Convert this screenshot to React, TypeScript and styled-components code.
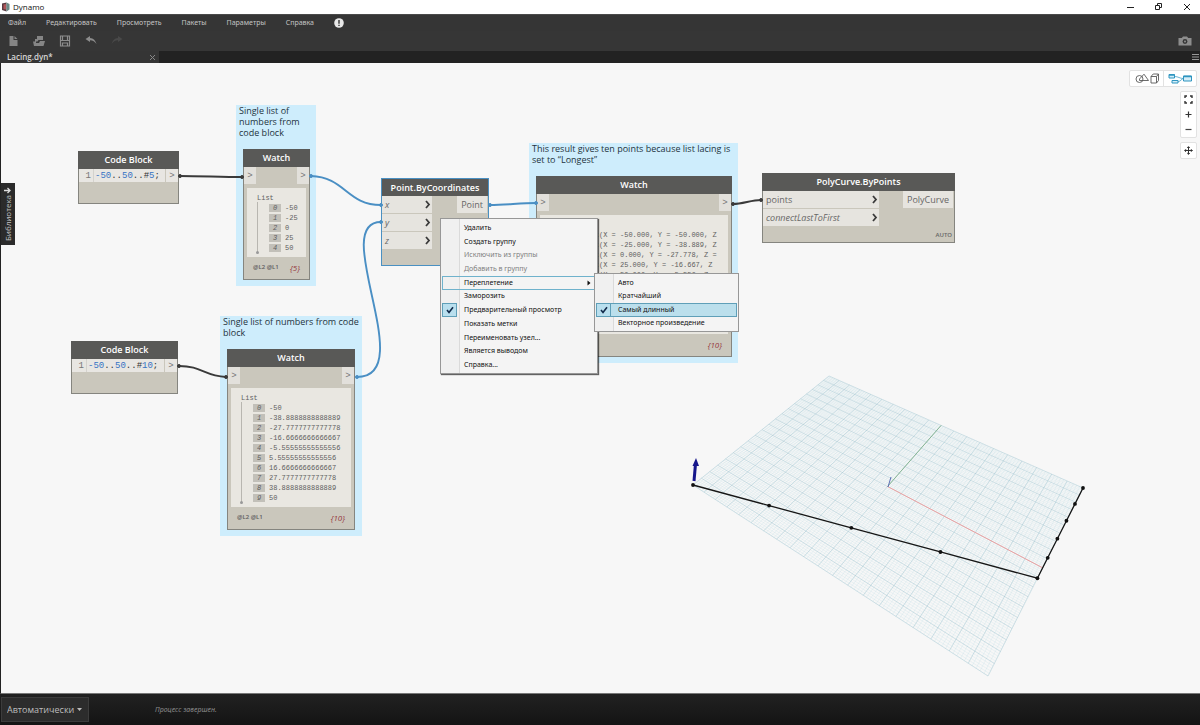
import React from "react";
import styled, { createGlobalStyle, css } from "styled-components";

const UI = `"Open Sans", "Noto Sans", sans-serif`;
const MENU = `"Noto Sans", "Open Sans", sans-serif`;
const MONO = `"Liberation Mono", "DejaVu Sans Mono", monospace`;

const GlobalStyle = createGlobalStyle`
  *, *::before, *::after { box-sizing: border-box; }
  html, body, #root { height: 100%; }
  body { margin: 0; font-family: ${UI}; background: #1b1b1b; overflow: hidden; }
  button, select { font: inherit; color: inherit; background: none; border: 0; padding: 0; margin: 0; }
`;

/* ---------- application frame ---------- */

const Shell = styled.div`
  display: flex;
  flex-direction: column;
  height: 100%;
`;

const TitleBar = styled.header`
  display: flex;
  align-items: center;
  gap: 3px;
  height: 14px;
  padding: 0 8px 0 1px;
  background: #fff;
  color: #111;
  font-size: 8px;
  line-height: 14px;
`;

const WindowButtons = styled.div`
  display: flex;
  gap: 18px;
  margin-left: auto;
`;

const IconButton = styled.button`
  display: flex;
  align-items: center;
  justify-content: center;
`;

const MenuBar = styled.nav`
  display: flex;
  align-items: center;
  gap: 20px;
  height: 17px;
  padding-left: 8px;
  background: #353535;
  border-top: 1px solid #4a4a4a;
  color: #c4c4c4;
  font-family: ${MENU};
  font-size: 7px;
  line-height: 16px;
`;

const ToolBar = styled.div`
  display: flex;
  align-items: center;
  gap: 12px;
  height: 20px;
  padding: 0 8px 0 6px;
  background: #363636;
  color: #8d8d8d;
`;

const ToolSpacer = styled.div`
  flex: 1;
`;

const TabStrip = styled.div`
  display: flex;
  justify-content: space-between;
  height: 12px;
  background: #222;
  color: #8a8a8a;
`;

const Tab = styled.div`
  display: flex;
  align-items: center;
  justify-content: space-between;
  width: 159px;
  padding: 0 3px 0 7px;
  background: #353535;
  color: #d6d6d6;
  font-size: 8px;
  font-weight: 600;
  line-height: 12px;
`;

const Workspace = styled.main`
  position: relative;
  flex: 1;
  min-height: 0;
  overflow: hidden;
  background: #f7f7f7;
  border-left: 1px solid #222;
  border-bottom: 1px solid #777;
`;

const StatusBar = styled.footer`
  display: flex;
  align-items: center;
  gap: 66px;
  height: 31px;
  padding-left: 1px;
  background: linear-gradient(#212121, #141414);
  color: #8a8a8a;
  font-family: ${MENU};
  font-size: 7px;
  font-style: italic;
`;

const RunMode = styled.label`
  position: relative;
  display: flex;
  align-items: center;
  height: 25px;
  background: #2c2c2c;
  border: 1px solid #3c3c3c;
  color: #bdbdbd;

  select {
    appearance: none;
    width: 86px;
    height: 23px;
    padding-left: 5px;
    font-family: ${UI};
    font-size: 9px;
    font-style: normal;
  }
  svg {
    position: absolute;
    right: 6px;
    pointer-events: none;
  }
`;

/* ---------- things that float over the canvas ---------- */

const LibraryTab = styled.button`
  position: absolute;
  left: -1px;
  top: 120px;
  display: flex;
  flex-direction: column;
  align-items: center;
  justify-content: space-between;
  width: 15px;
  height: 62px;
  padding: 4px 0;
  background: #2b2b2b;
  color: #c4c4c4;
  font-size: 8px;
  line-height: 10px;

  span {
    writing-mode: vertical-rl;
    transform: rotate(180deg);
  }
`;

const ViewControls = styled.div`
  position: absolute;
  top: 7px;
  right: 3px;
  display: flex;
  flex-direction: column;
  align-items: flex-end;
  gap: 4px;
`;

const ControlBox = styled.div<{ $row?: boolean }>`
  display: flex;
  flex-direction: ${(p) => (p.$row ? "row" : "column")};
  background: #fff;
  border: 1px solid #e2e2e2;
  border-radius: 2px;
  color: #555;

  button { width: 15px; height: 15px; }
  ${(p) =>
    p.$row &&
    css`
      button { width: 33px; height: 15px; }
      button + button { border-left: 1px solid #e2e2e2; }
    `}
`;

const Overlay = styled.svg`
  position: absolute;
  left: -1px;
  top: 0;
  pointer-events: none;
`;

const placed = css<{ $x: number; $y: number; $w: number; $h: number }>`
  position: absolute;
  left: ${(p) => p.$x - 1}px;
  top: ${(p) => p.$y}px;
  width: ${(p) => p.$w}px;
  height: ${(p) => p.$h}px;
`;

const Group = styled.section`
  ${placed}
  padding: 0 3px;
  background: #ceedfc;
  color: #1f3440;
  font-size: 9px;
  line-height: 11px;
`;

const NodeTitle = styled.h2`
  flex: none;
  margin: -1px -1px 0;
  height: 18px;
  background: #595957;
  color: #fff;
  font-size: 9px;
  font-weight: 600;
  line-height: 18px;
  text-align: center;
`;

const NodeBox = styled.article<{ $selected?: boolean }>`
  ${placed}
  display: flex;
  flex-direction: column;
  background: #cac7bc;
  border: 1px solid ${(p) => (p.$selected ? "#4a90c2" : "#85857f")};
  color: #666;
  font-size: 9px;

  ${(p) => p.$selected && css`${NodeTitle} { margin: 0; height: 17px; line-height: 17px; }`}
`;

const CodeRow = styled.div`
  display: flex;
  height: 13px;
  background: #e8e6e2;
  font-family: ${MONO};
  font-size: 9px;
  line-height: 14px;
  white-space: pre;
`;

const LineNumber = styled.span`
  width: 15px;
  padding-right: 2px;
  border-right: 1px solid #d4d2cd;
  text-align: right;
  color: #777;
`;

const Code = styled.code`
  flex: 1;
  padding-left: 1px;
  font-family: inherit;
  color: #333;
  b { font-weight: 400; color: #3673c4; }
`;

const CodePort = styled.span`
  width: 13px;
  border-left: 1px solid #cac7bc;
  text-align: center;
  color: #777;
`;

const PortRow = styled.div`
  display: flex;
  justify-content: space-between;
  align-items: flex-start;
`;

const PortMark = styled.span`
  width: 12px;
  height: 17px;
  background: #e2e0db;
  color: #777;
  font-family: ${MONO};
  font-size: 9px;
  line-height: 18px;
  text-align: center;
`;

const InputPorts = styled.div<{ $w: number }>`
  display: flex;
  flex-direction: column;
  gap: 1px;
  width: ${(p) => p.$w}px;
`;

const InputPort = styled.div<{ $optional?: boolean }>`
  display: flex;
  align-items: center;
  justify-content: space-between;
  height: 17px;
  padding: 0 1px 0 3px;
  background: #e6e4df;
  font-style: ${(p) => (p.$optional ? "italic" : "normal")};
`;

const OutputPort = styled.div`
  height: 17px;
  margin-right: 1px;
  padding: 0 4px;
  background: #e6e4df;
  line-height: 17px;
`;

const Lacing = styled.div`
  margin: auto 2px 3px auto;
  font-size: 6px;
  font-weight: 600;
  line-height: 8px;
`;

const Panel = styled.div`
  flex: 1;
  min-height: 0;
  margin: 4px 3px 0;
  padding: 6px 0 0 10px;
  overflow: hidden;
  background: #e9e7e1;
  color: #5e5e5e;
  font-family: ${MONO};
  font-size: 7px;
  line-height: 8px;
`;

const List = styled.ol`
  position: relative;
  margin: 0;
  padding: 1px 0 0 12px;
  list-style: none;

  &::before {
    content: "";
    position: absolute;
    left: 0;
    top: 0;
    bottom: 0;
    border-left: 1px solid #b8b6b0;
  }
  &::after {
    content: "";
    position: absolute;
    left: -1px;
    bottom: -1px;
    width: 3px;
    height: 3px;
    border-radius: 50%;
    background: #999;
  }
`;

const ListRow = styled.li`
  display: flex;
  align-items: center;
  gap: 4px;
  height: 10px;
  white-space: pre;

  i {
    width: 12px;
    height: 8px;
    background: #c2c0b9;
    text-align: center;
  }
`;

const NodeFooter = styled.div`
  display: flex;
  flex: none;
  align-items: center;
  justify-content: space-between;
  height: 22px;
  padding: 0 9px 2px;
  font-size: 6px;
  font-weight: 600;
  color: #5c5c5c;

  em { font-size: 8px; font-weight: 400; color: #96393c; }
`;

const ContextMenu = styled.ul<{ $raised?: boolean }>`
  ${placed}
  display: grid;
  grid-auto-rows: 1fr;
  margin: 0;
  padding: 2px 1px 1px;
  list-style: none;
  background: linear-gradient(90deg, #f0f0f0 18px, #dadada 18px, #dadada 19px, #f4f4f4 19px);
  border: 1px solid #979797;
  box-shadow: ${(p) => (p.$raised ? "1px 1px 1px rgba(0, 0, 0, 0.6)" : "none")};
  color: #111;
  font-family: ${MENU};
  font-size: 7px;
`;

const MenuItem = styled.button<{ $state?: "open" | "chosen" }>`
  display: grid;
  grid-template-columns: 14px 1fr auto;
  align-items: center;
  column-gap: 7px;
  width: 100%;
  height: 100%;
  padding: 0 4px 0 0;
  border: 1px solid transparent;
  text-align: left;
  line-height: 10px;
  white-space: nowrap;

  &:disabled { color: #808080; }
  ${(p) => p.$state === "open" && css`border-color: #6fb2cc;`}
  ${(p) => p.$state === "chosen" && css`border-color: #5f9fb8; background: #bbdfec;`}
`;

const CheckCell = styled.span<{ $on?: boolean }>`
  display: flex;
  align-items: center;
  justify-content: center;
  align-self: stretch;
  margin: -1px 0 -1px -1px;
  ${(p) => p.$on && css`background: #b9dfee; border: 1px solid #5f9fb8;`}
`;

/* ---------- pieces ---------- */

const Check = () => (
  <svg width="8" height="8" viewBox="0 0 8 8" fill="none" stroke="#112a4a" strokeWidth="1.6">
    <path d="M1 4l2 2.4L7 1.2" />
  </svg>
);

const Chevron = () => (
  <svg width="7" height="9" viewBox="0 0 7 9" fill="none" stroke="#3a3a3a" strokeWidth="1.8">
    <path d="M2 1l3 3.5L2 8" />
  </svg>
);

type Box = { x: number; y: number; w: number; h: number };

function CodeBlock({ x, y, w, h, count }: Box & { count: string }) {
  return (
    <NodeBox $x={x} $y={y} $w={w} $h={h}>
      <NodeTitle>Code Block</NodeTitle>
      <CodeRow>
        <LineNumber>1</LineNumber>
        <Code>
          <b>-50</b>..<b>50</b>..#<b>{count}</b>;
        </Code>
        <CodePort>&gt;</CodePort>
      </CodeRow>
    </NodeBox>
  );
}

function Watch({ x, y, w, h, rows }: Box & { rows: string[] }) {
  return (
    <NodeBox $x={x} $y={y} $w={w} $h={h}>
      <NodeTitle>Watch</NodeTitle>
      <PortRow>
        <PortMark>&gt;</PortMark>
        <PortMark>&gt;</PortMark>
      </PortRow>
      <Panel>
        List
        <List>
          {rows.map((value, i) => (
            <ListRow key={i}>
              <i>{i}</i>
              {value}
            </ListRow>
          ))}
        </List>
      </Panel>
      <NodeFooter>
        <span>@L2 @L1</span>
        <em>{`{${rows.length}}`}</em>
      </NodeFooter>
    </NodeBox>
  );
}

const fiveNumbers = ["-50", "-25", "0", "25", "50"];
const tenNumbers = [
  "-50",
  "-38.8888888888889",
  "-27.7777777777778",
  "-16.6666666666667",
  "-5.55555555555556",
  "5.55555555555556",
  "16.6666666666667",
  "27.7777777777778",
  "38.8888888888889",
  "50",
];
/* Longest lacing: the last x repeats once the shorter list runs out. */
const points = tenNumbers.map((n, i) => ({
  x: [-50, -25, 0, 25, 50][Math.min(i, 4)],
  y: parseFloat(n),
}));
const VISIBLE_CHARS = 33;
const pointRows = points.map((p) =>
  `Point(X = ${p.x.toFixed(3)}, Y = ${p.y.toFixed(3)}, Z = 0.000)`.slice(0, VISIBLE_CHARS),
);

/* Perspective map from the model plane (-50..50 on both axes) to the canvas. */
const corner = { o: [693, 422], x: [988, 613], y: [829, 313], xy: [1083, 425] };
function project(mx: number, my: number): [number, number] {
  const { o, x, y, xy } = corner;
  const u = (mx + 50) / 100;
  const v = (my + 50) / 100;
  const dx1 = x[0] - xy[0];
  const dx2 = y[0] - xy[0];
  const dx3 = o[0] - x[0] + xy[0] - y[0];
  const dy1 = x[1] - xy[1];
  const dy2 = y[1] - xy[1];
  const dy3 = o[1] - x[1] + xy[1] - y[1];
  const det = dx1 * dy2 - dx2 * dy1;
  const g = (dx3 * dy2 - dx2 * dy3) / det;
  const h = (dx1 * dy3 - dx3 * dy1) / det;
  const k = g * u + h * v + 1;
  return [
    ((x[0] - o[0] + g * x[0]) * u + (y[0] - o[0] + h * y[0]) * v + o[0]) / k,
    ((x[1] - o[1] + g * x[1]) * u + (y[1] - o[1] + h * y[1]) * v + o[1]) / k,
  ];
}
const segment = (ax: number, ay: number, bx: number, by: number) =>
  `M${project(ax, ay).join(" ")}L${project(bx, by).join(" ")}`;

function gridPath(step: number) {
  let d = "";
  for (let t = -50; t <= 50; t += step) d += segment(t, -50, t, 50) + segment(-50, t, 50, t);
  return d;
}

function Scene() {
  const curve = points.map((p) => project(p.x, p.y));
  return (
    <Overlay width="1200" height="630" fill="none">
      <path d={gridPath(1)} stroke="#9ed0da" strokeOpacity="0.34" strokeWidth="0.5" />
      <path d={gridPath(5)} stroke="#7fafbf" strokeOpacity="0.5" strokeWidth="0.5" />
      <path d={segment(0, 0, 50, 0)} stroke="#ee9a9a" strokeWidth="0.9" />
      <path d={segment(0, 0, 0, 50)} stroke="#7fb08a" strokeWidth="0.9" />
      <path d="M888 424l3-10" stroke="#5b6fb5" />
      <polyline points={curve.map((p) => p.join(",")).join(" ")} stroke="#161616" strokeWidth="1.3" />
      {curve.map(([cx, cy], i) => (
        <circle key={i} cx={cx} cy={cy} r="1.9" fill="#111" />
      ))}
      <path d="M694 418l1.5-17" stroke="#17178c" strokeWidth="3" />
      <path d="M692.5 403l3.5-8 3 8z" fill="#17178c" />
    </Overlay>
  );
}

const blue = "#4a8fc4";
const dark = "#3a3a3a";
const wires = [
  { d: "M180 113C200 113 222 114 242 114", c: dark, a: [180, 113], b: [242, 114] },
  { d: "M179 303C202 303 204 313 226 314", c: dark, a: [179, 303], b: [226, 314] },
  { d: "M311 113C345 114 347 142 381 142", c: blue, a: [311, 113], b: [381, 142] },
  { d: "M357 314C420 314 328 159 381 159", c: blue, a: [357, 314], b: [381, 159] },
  { d: "M490 142C506 142 520 140 536 140", c: blue, a: [490, 142], b: [536, 140] },
  { d: "M733 141C743 141 751 137 761 137", c: dark, a: [733, 141], b: [761, 137] },
];

function Wires() {
  return (
    <Overlay width="1200" height="630" fill="none">
      {wires.map((w, i) => (
        <g key={i} stroke={w.c} fill={w.c}>
          <path d={w.d} fill="none" strokeWidth="1.9" />
          <circle cx={w.a[0]} cy={w.a[1]} r="1.5" />
          <circle cx={w.b[0]} cy={w.b[1]} r="1.5" />
        </g>
      ))}
    </Overlay>
  );
}

type Item = { label: string; disabled?: boolean; checked?: boolean; state?: "open" | "chosen" };

const nodeMenu: Item[] = [
  { label: "Удалить" },
  { label: "Создать группу" },
  { label: "Исключить из группы", disabled: true },
  { label: "Добавить в группу", disabled: true },
  { label: "Переплетение", state: "open" },
  { label: "Заморозить" },
  { label: "Предварительный просмотр", checked: true },
  { label: "Показать метки" },
  { label: "Переименовать узел..." },
  { label: "Является выводом" },
  { label: "Справка..." },
];
const lacingMenu: Item[] = [
  { label: "Авто" },
  { label: "Кратчайший" },
  { label: "Самый длинный", checked: true, state: "chosen" },
  { label: "Векторное произведение" },
];

function Menu({ x, y, w, h, items, raised }: Box & { items: Item[]; raised?: boolean }) {
  return (
    <ContextMenu $x={x} $y={y} $w={w} $h={h} $raised={raised}>
      {items.map((item) => (
        <li key={item.label}>
          <MenuItem disabled={item.disabled} $state={item.state}>
            <CheckCell $on={item.checked}>{item.checked && <Check />}</CheckCell>
            {item.label}
            {item.state === "open" && (
              <svg width="4" height="6" viewBox="0 0 4 6">
                <path d="M0.5 0.5L3.5 3L0.5 5.5z" fill="#111" />
              </svg>
            )}
          </MenuItem>
        </li>
      ))}
    </ContextMenu>
  );
}

function WindowChrome() {
  return (
    <>
      <TitleBar>
        <svg width="9" height="10" viewBox="0 0 9 10">
          <path d="M1 1.5L5.5 .5v9L1 8z" fill="#5a3a40" />
          <path d="M2.500 2.500l2.500-.5v5.500L2.500 7z" fill="#b0555a" />
          <path d="M5.500 .5l3 1.500v5.500l-3 2z" fill="#6b8a86" />
        </svg>
        Dynamo
        <WindowButtons>
          <IconButton aria-label="Свернуть">
            <svg width="10" height="10" stroke="#222"><path d="M1 5.500h7" /></svg>
          </IconButton>
          <IconButton aria-label="Восстановить">
            <svg width="10" height="10" fill="none" stroke="#222">
              <path d="M1.500 3.500h4v4h-4zM3.500 3.500v-2h4v4h-2" />
            </svg>
          </IconButton>
          <IconButton aria-label="Закрыть">
            <svg width="10" height="10" stroke="#222"><path d="M2 2l6 6M8 2L2 8" /></svg>
          </IconButton>
        </WindowButtons>
      </TitleBar>
      <MenuBar>
        {["Файл", "Редактировать", "Просмотреть", "Пакеты", "Параметры", "Справка"].map((m) => (
          <button key={m}>{m}</button>
        ))}
        <IconButton aria-label="Уведомления">
          <svg width="10" height="10" viewBox="0 0 10 10">
            <circle cx="5" cy="5" r="4.8" fill="#e8e8e8" />
            <path d="M5 2v3.800M5 6.800v1.300" stroke="#333" strokeWidth="1.400" />
          </svg>
        </IconButton>
      </MenuBar>
      <ToolBar>
        <IconButton aria-label="Создать">
          <svg width="14" height="12" viewBox="0 0 14 12" fill="#858585">
            <path d="M3.500 1h4v4h4v6h-8zM8.500 1l3 3h-3z" />
          </svg>
        </IconButton>
        <IconButton aria-label="Открыть">
          <svg width="14" height="12" viewBox="0 0 14 12" fill="#858585">
            <path d="M5 1h6v4H6.500L5.500 6.500H3V4h2zM1 6.500h3v1.500h3l1-2h5L11.500 11H2z" />
          </svg>
        </IconButton>
        <IconButton aria-label="Сохранить">
          <svg width="14" height="12" viewBox="0 0 14 12" fill="none" stroke="#8d8d8d" strokeWidth="1.200">
            <path d="M2.500 1h9v10h-9zM4.500 1v4.500M9.500 1v4.500M4.500 11V8h5v3M2.500 5.500h9" />
          </svg>
        </IconButton>
        <IconButton aria-label="Отменить">
          <svg width="14" height="12" viewBox="0 0 14 12" fill="#8d8d8d">
            <path d="M1.500 4L6 1v2c3.500.3 5.500 2.500 6.500 6C10.800 6.500 9 5.300 6 5.200V7z" />
          </svg>
        </IconButton>
        <IconButton aria-label="Повторить" disabled>
          <svg width="14" height="12" viewBox="0 0 14 12" fill="#494949">
            <path d="M12.500 4L8 1v2c-3.500.3-5.500 2.500-6.500 6C3.200 6.500 5 5.300 8 5.200V7z" />
          </svg>
        </IconButton>
        <ToolSpacer />
        <IconButton aria-label="Снимок экрана">
          <svg width="14" height="10" viewBox="0 0 14 10">
            <path d="M.5 2h3.300L5 .5h4L10.200 2h3.300v7.500H.5z" fill="#8d8d8d" />
            <circle cx="7" cy="5.500" r="2.400" fill="#363636" />
            <circle cx="7" cy="5.500" r="1" fill="#8d8d8d" />
          </svg>
        </IconButton>
      </ToolBar>
      <TabStrip>
        <Tab>
          Lacing.dyn*
          <IconButton aria-label="Закрыть вкладку">
            <svg width="7" height="7" stroke="#888"><path d="M1 1l5 5M6 1L1 6" /></svg>
          </IconButton>
        </Tab>
        <IconButton aria-label="Список вкладок">
          <svg width="9" height="8" stroke="#999"><path d="M1 1.500h7M1 4h7M1 6.500h7" /></svg>
        </IconButton>
      </TabStrip>
    </>
  );
}

function Controls() {
  return (
    <ViewControls>
      <ControlBox $row>
        <IconButton aria-label="3D">
          <svg width="24" height="11" viewBox="0 0 24 11" fill="none" stroke="#5a5a5a" strokeWidth=".9">
            <circle cx="4.500" cy="6" r="3.500" />
            <path d="M4.500 6L9 1.200l4.500 6.300H4.500zM16 3.500h5.500V10H16zM16 3.500L18.200 1h5.300v6.500l-2 2.500M21.500 3.500l2-2.500" />
          </svg>
        </IconButton>
        <IconButton aria-label="Граф">
          <svg width="24" height="11" viewBox="0 0 24 11" fill="none" stroke="#2f95c0">
            <path d="M1 1.500h5.500v3.500H1zM4 7.500h6v2.500H4zM15.500 3h8v5h-8z" fill="#d5edf7" />
            <path d="M1 2h5.500M15.500 3.500h8" strokeWidth="1.500" />
            <path d="M6.500 3.500c4 0 5 2 9 2M10 8.500c3 0 3-2.500 5.500-3" strokeWidth=".7" />
          </svg>
        </IconButton>
      </ControlBox>
      <ControlBox>
        <IconButton aria-label="По размеру">
          <svg width="9" height="9" fill="none" stroke="#333" strokeWidth="1.400">
            <path d="M1 3V1h2M6 1h2v2M8 6v2H6M3 8H1V6" />
          </svg>
        </IconButton>
        <IconButton aria-label="Увеличить">
          <svg width="9" height="9" stroke="#333" strokeWidth="1.200"><path d="M1.500 4.500h6M4.500 1.500v6" /></svg>
        </IconButton>
        <IconButton aria-label="Уменьшить">
          <svg width="9" height="9" stroke="#444" strokeWidth="1.200"><path d="M1.500 4.500h6" /></svg>
        </IconButton>
      </ControlBox>
      <ControlBox>
        <IconButton aria-label="Панорама">
          <svg width="9" height="9" viewBox="0 0 9 9" fill="none" stroke="#333">
            <path d="M4.500.7v7.600M.7 4.500h7.600M3.200 2l1.300-1.300L5.800 2M3.200 7l1.300 1.300L5.800 7M2 3.200L.7 4.500 2 5.800M7 3.200l1.300 1.300L7 5.800" />
          </svg>
        </IconButton>
      </ControlBox>
    </ViewControls>
  );
}

export default function App() {
  return (
    <Shell>
      <GlobalStyle />
      <WindowChrome />
      <Workspace>
        <Scene />
        <Group $x={236} $y={42} $w={80} $h={181}>Single list of numbers from code block</Group>
        <Group $x={220} $y={253} $w={142} $h={220}>Single list of numbers from code block</Group>
        <Group $x={529} $y={80} $w={209} $h={220}>
          This result gives ten points because list lacing is set to “Longest”
        </Group>

        <CodeBlock x={78} y={88} w={101} h={53} count="5" />
        <CodeBlock x={71} y={278} w={107} h={53} count="10" />
        <Watch x={243} y={86} w={67} h={131} rows={fiveNumbers} />
        <Watch x={227} y={286} w={128} h={181} rows={tenNumbers} />
        <Watch x={536} y={113} w={196} h={181} rows={pointRows} />

        <NodeBox $x={381} $y={115} $w={108} $h={88} $selected>
          <NodeTitle>Point.ByCoordinates</NodeTitle>
          <PortRow>
            <InputPorts $w={50}>
              {["x", "y", "z"].map((name) => (
                <InputPort key={name} $optional>{name}<Chevron /></InputPort>
              ))}
            </InputPorts>
            <OutputPort>Point</OutputPort>
          </PortRow>
        </NodeBox>

        <NodeBox $x={762} $y={110} $w={193} $h={70}>
          <NodeTitle>PolyCurve.ByPoints</NodeTitle>
          <PortRow>
            <InputPorts $w={116}>
              <InputPort>points<Chevron /></InputPort>
              <InputPort $optional>connectLastToFirst<Chevron /></InputPort>
            </InputPorts>
            <OutputPort>PolyCurve</OutputPort>
          </PortRow>
          <Lacing>AUTO</Lacing>
        </NodeBox>

        <Wires />
        <Menu x={440} y={155} w={158} h={156} items={nodeMenu} raised />
        <Menu x={594} y={210} w={145} h={59} items={lacingMenu} />
        <LibraryTab>
          <svg width="7" height="7" viewBox="0 0 7 7" fill="none" stroke="#ddd" strokeWidth="1.300">
            <path d="M0 3.500h6M3.500 1L6 3.500 3.500 6" />
          </svg>
          <span>Библиотека</span>
        </LibraryTab>
        <Controls />
      </Workspace>
      <StatusBar>
        <RunMode>
          <select aria-label="Режим запуска">
            <option>Автоматически</option>
          </select>
          <svg width="5" height="3"><path d="M0 0h5L2.500 3z" fill="#bbb" /></svg>
        </RunMode>
        Процесс завершен.
      </StatusBar>
    </Shell>
  );
}
